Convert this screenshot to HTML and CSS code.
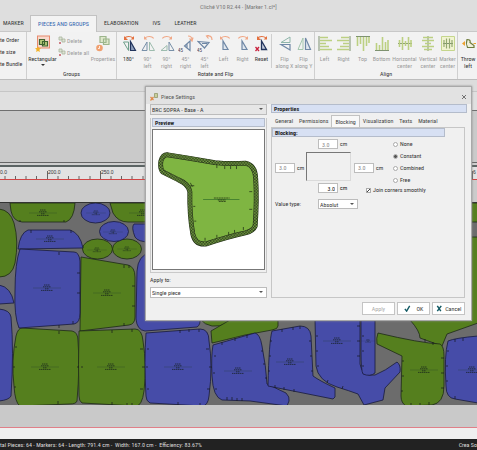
FILE: index.html
```html
<!DOCTYPE html>
<html lang="en">
<head>
<meta charset="utf-8">
<title>Cliché V10 R2.44 - [Marker 1.cl*]</title>
<link rel="stylesheet" href="styles.css">
</head>
<body>
<svg class="defs" aria-hidden="true">
  <defs>
    <pattern id="mesh" width="3" height="3" patternUnits="userSpaceOnUse"><rect width="3" height="3" fill="#26361a"/><path d="M0 0h1.500v1.500H0zM1.500 1.500H3V3H1.500z" fill="#7da845"/></pattern>
    <symbol id="arc-r" viewBox="0 0 14 5"><path d="M1.5 3.5C4 .8 9 .8 11.5 3" fill="none" stroke="currentColor" stroke-width="1.3"/><path d="M12.8.8v4H9z" fill="currentColor"/></symbol>
    <symbol id="arc-l" viewBox="0 0 14 5"><path d="M12.5 3.5C10 .8 5 .8 2.5 3" fill="none" stroke="currentColor" stroke-width="1.3"/><path d="M1.2.8v4H5z" fill="currentColor"/></symbol>
    <g id="label"><path d="M-14 0h28" stroke="#203a2a" stroke-width=".4" opacity=".7"/><path d="M-3-3h6M-4-1.2h8M-2 .8h4M-6 2.4h12" stroke="#14201c" stroke-width=".7" stroke-dasharray="1.500 .5"/></g>
  </defs>
</svg>

<header class="titlebar">Cliché V10 R2.44 - [Marker 1.cl*]</header>
<nav class="tabs">
  <a href="#" class="tab t-marker">MARKER</a>
  <a href="#" class="tab active">PIECES AND GROUPS</a>
  <a href="#" class="tab">ELABORATION</a>
  <a href="#" class="tab">IVS</a>
  <a href="#" class="tab">LEATHER</a>
</nav>

<section class="ribbon">
  <div class="group create">
    <button>te Order</button><button>te size</button><button>te Bundle</button>
  </div>
  <div class="group groups">
    <div class="tools">
      <button class="tool w-rect"><svg viewBox="0 0 16 17"><rect x="2.5" y="1" width="12" height="12" fill="#f7d9cc" stroke="#e88a6c"/><path d="M4.5 4.500h5v5h-5zM7.500 6.500h5v4.500h-5z" fill="#b8ce7c" stroke="#3f6430" stroke-width="1.200"/><path d="M3 11l.9 2.100 2.100.2-1.600 1.500.5 2.200L3 15.900 1.100 17l.5-2.200L0 13.300l2.100-.2z" fill="#f3b125"/></svg><span>Rectangular</span><i class="caret"></i></button>
      <div class="pair">
        <button class="row off"><svg viewBox="0 0 8 9"><path d="M1 1h3v3H1zM4 3h3v3H4z" fill="#dde3d2" stroke="#a9b5a0" stroke-width=".8"/><path d="M1 6l2 2M3 6L1 8" stroke="#cf7f86"/></svg>Delete</button>
        <button class="row off"><svg viewBox="0 0 8 9"><path d="M1 1h3v3H1zM4 3h3v3H4z" fill="#dde3d2" stroke="#a9b5a0" stroke-width=".8"/><path d="M1 6l2 2M3 6L1 8" stroke="#cf7f86"/></svg>Delete all</button>
      </div>
      <button class="tool w-prop off"><svg viewBox="0 0 16 17"><path d="M5 1.500h6v6H5zM8.500 4h5.500v5.500H8.500z" fill="#dfe8cc" stroke="#9cb58c" stroke-width="1.200"/><circle cx="4.500" cy="13" r="3.300" fill="#f0a070"/><path d="M4.500 11v2.500h-1.500" stroke="#fff" fill="none" stroke-width=".8"/></svg><span>Properties</span></button>
    </div>
    <h2>Groups</h2>
  </div>
  <div class="group rotate">
    <div class="tools">
      <button class="tool"><svg viewBox="0 0 16 17"><g color="#e4703e"><use href="#arc-r" x="2" y="0" width="12" height="5"/><path d="M3 1v4h4z" fill="currentColor"/></g><path d="M7.500 7v8.500L2.500 7z" fill="none" stroke="#6fa08c"/><path d="M9.500 6.500v9h5z" fill="#8fa0bd" stroke="#22345c" stroke-width="1.200"/></svg><span>180°</span></button>
      <button class="tool off"><svg viewBox="0 0 16 17"><use href="#arc-l" x="3" width="12" height="5" color="#f0a887"/><path d="M7 7v8.500H2z" fill="none" stroke="#7890a8"/><path d="M9.500 7v8.500h5z" fill="none" stroke="#9dbcae"/></svg><span>90°<br>left</span></button>
      <button class="tool off"><svg viewBox="0 0 16 17"><use href="#arc-r" x="2" width="12" height="5" color="#f0a887"/><path d="M8 15.500H2l6-5z" fill="none" stroke="#9dbcae"/><path d="M10 7v8.500h5z" fill="none" stroke="#7890a8"/></svg><span>90°<br>right</span></button>
      <button class="tool off"><svg viewBox="0 0 16 17"><path d="M10 1q4 0 4 4M11.500 3.500L14 6l1-3.500" fill="none" stroke="#f0a887" stroke-width="1.200"/><path d="M12 6v9.500L6.500 11zM9 8.500v5" fill="none" stroke="#6e87a5" stroke-width="1.200"/><text x="0" y="17" class="deg">45</text></svg><span>45°<br>right</span></button>
      <button class="tool off"><svg viewBox="0 0 16 17"><path d="M10 1q5-1 5 4M12 0L9.500 1l2 2.500" fill="none" stroke="#f0a887" stroke-width="1.200"/><path d="M1 6.500l11 1L7.500 13zM5 8.500h5" fill="none" stroke="#6e87a5" stroke-width="1.200"/><text x="0" y="17" class="deg">45</text></svg><span>45°<br>left</span></button>
      <button class="tool off"><svg viewBox="0 0 16 17"><use href="#arc-l" x="3" width="12" height="5" color="#f0a887"/><path d="M7 6v8.500h5z" fill="#dfe6ee" stroke="#6e87a5" stroke-width="1.200"/></svg><span>Left</span></button>
      <button class="tool off"><svg viewBox="0 0 16 17"><use href="#arc-r" x="2" width="12" height="5" color="#f0a887"/><path d="M7 6v8.500h5z" fill="#dfe6ee" stroke="#6e87a5" stroke-width="1.200"/></svg><span>Right</span></button>
      <button class="tool"><svg viewBox="0 0 16 17"><g color="#e4703e"><use href="#arc-r" x="2" width="12" height="5"/><path d="M3 1v4h4z" fill="currentColor"/></g><path d="M7.500 6v8.500h5z" fill="#c3ccdb" stroke="#22345c" stroke-width="1.300"/><path d="M1.500 12l3.500 4M5 12l-3.500 4" stroke="#c8203c" stroke-width="1.300"/></svg><span>Reset</span></button>
      <div class="sep"></div>
      <button class="tool off"><svg viewBox="0 0 16 17"><path d="M13 7.500H4l9-5.500z" fill="none" stroke="#8fb5aa"/><path d="M13 9.500H4l9 5.500z" fill="none" stroke="#7088a6" stroke-width="1.200"/></svg><span>Flip<br>along X</span></button>
      <button class="tool off"><svg viewBox="0 0 16 17"><path d="M7 3v11.500H2z" fill="none" stroke="#a3c6ae"/><path d="M9.500 3v11.500h5z" fill="#dfe6ee" stroke="#7088a6" stroke-width="1.200"/></svg><span>Flip<br>along Y</span></button>
    </div>
    <h2>Rotate and Flip</h2>
  </div>
  <div class="group align">
    <div class="tools">
      <button class="tool off"><svg viewBox="0 0 16 17"><path d="M2 1v15" stroke="#7e9270"/><path d="M3 2.500h8M3 5.500h12M3 8.500h6M3 11.500h9M3 14.500h12" stroke="#bcd082" stroke-width="1.600"/></svg><span>Left</span></button>
      <button class="tool off"><svg viewBox="0 0 16 17"><path d="M14 1v15" stroke="#7e9270"/><path d="M13 2.500H5M13 5.500H1M13 8.500H7M13 11.500H4M13 14.500H1" stroke="#bcd082" stroke-width="1.600"/></svg><span>Right</span></button>
      <button class="tool off"><svg viewBox="0 0 16 17"><path d="M1 1.500h14" stroke="#7e9270"/><path d="M2.500 2v9M5.500 2v7M8.500 2v14M11.500 2v9M14 2v6" stroke="#bcd082" stroke-width="1.600"/></svg><span>Top</span></button>
      <button class="tool off"><svg viewBox="0 0 16 17"><path d="M1 15.500h14" stroke="#7e9270"/><path d="M2.500 15V8M5.500 15v-5M8.500 15V2M11.500 15V7M14 15V5" stroke="#bcd082" stroke-width="1.600"/></svg><span>Bottom</span></button>
      <button class="tool w-h off"><svg viewBox="0 0 16 17"><path d="M1 8.500h14" stroke="#7e9270"/><path d="M2.500 5v7M5.500 2v13M8.500 6v5M11.500 2v13M14 5v7" stroke="#bcd082" stroke-width="1.600"/></svg><span>Horizontal<br>center</span></button>
      <button class="tool w-v off"><svg viewBox="0 0 16 17"><path d="M8 1v15" stroke="#7e9270"/><path d="M3 2.500h10M2 5.500h12M5 8.500h6M2 11.500h12M4 14.500h8" stroke="#bcd082" stroke-width="1.600"/></svg><span>Vertical<br>center</span></button>
      <button class="tool w-m off"><svg viewBox="0 0 16 17"><path d="M1.500 1.500h13v14h-13z" fill="#f1f4d2" stroke="#c5d68c"/><path d="M3 8.500h10" stroke="#7e9270"/><path d="M4 5v7M6.500 3.500v10M9.500 3.500v10M12 5v7" stroke="#93a870" stroke-width="1.200"/></svg><span>Marker<br>center</span></button>
    </div>
    <h2>Align</h2>
  </div>
  <div class="group throw">
    <div class="tools">
      <button class="tool w-throw"><svg viewBox="0 0 16 17"><path d="M7 4.500q4 0 3 3l4 3v2H7.500q-2-4-.5-8z" fill="#f0f0dc" stroke="#6e7c3c" stroke-width="1.200"/><path d="M5 6v5L2 8.500z" fill="#eca22f"/><path d="M13.500 8.500H16" stroke="#eca22f"/></svg><span>Throw<br>left</span></button>
    </div>
  </div>
</section>

<main class="workspace">
  <div class="strip"></div>
  <div class="band"></div>
  <div class="overview"></div>
  <div class="splitter"></div>
  <svg class="ruler" viewBox="0 0 477 12" preserveAspectRatio="xMinYMin slice">
    <path d="M5 9v3M15.500 9v3M26 9v3M36.500 9v3M47.500 4v8M58 9v3M68.500 9v3M79 9v3M90 9v3M100.500 4v8M111 9v3M121.500 9v3M132 9v3M143 9v3M472.500 4v8" stroke="#444" stroke-width=".8"/>
    <text x="0" y="7">0.0</text><text x="48" y="7">200.0</text><text x="101" y="7">250.0</text><text x="473" y="7">6</text>
  </svg>
  <div class="margin-top"></div>
  <svg class="pieces" viewBox="0 202 477 203" preserveAspectRatio="xMinYMin slice" role="img" aria-label="Nested pieces">
    <g class="g">
      <path d="M10 202L11 210Q13 220 22 221H66Q74 218 75 202z"/>
      <path d="M110 202l3 10Q118 221 128 221H160V202z"/>
      <ellipse cx="97.500" cy="248" rx="15" ry="10"/><ellipse cx="127" cy="248" rx="14.500" ry="10"/>
      <path d="M-1 208Q10 209 14 222Q19 240 15 262Q12 276-1 276z"/>
      <path d="M81 256l47 8q7 2 7 12v40q0 7-6 8l-49 6z"/>
      <path d="M22 327l50 3q6 1 6 10q2 25-1 60q-1 3-7 3l-50 2q-5-3-6-20q-3-25 2-50q2-8 6-8z"/>
      <path d="M79 330l56-2q7 0 8 12q4 25 1 50q-2 15-8 15l-54-3q-3-2-3-7q-1-30 0-65z"/>
      <path d="M200 318q10 12 28 4l6-4z"/>
      <path d="M211 330l19-11h48v6q0 3-6 4l-27 5q-20 5-33 8z"/>
      <path d="M410 319h61v-83h7v86l-31 11-5 12-22-8q0-7-10-18z"/>
      <path d="M470 202h8v19h-8z"/>
      <path d="M378 332q42 10 62 11q4 2 4 12v30q0 17-12 19l-26 1q-5-3-5-10l1-40-25-12q-1-6 1-11z"/>
    </g>
    <g class="b">
      <ellipse cx="95.500" cy="212" rx="14.500" ry="10"/><ellipse cx="114" cy="230.500" rx="14.500" ry="10"/>
      <path d="M18 248Q20 232 28 229H70Q80 232 83 247z"/>
      <path d="M20 248Q15 262 15 290Q14 315 19 327L74 323Q80 322 80 312V260Q79 251 74 251z"/>
      <path d="M150 223H134Q131 226 135 236Q138 241 150 241z"/>
      <path d="M150 252q-12 2-13 18l-1 48q1 11 9 12l52-4q4-2 3-11v-60z"/>
      <path d="M-1 284Q11 286 14 302L-1 303z"/>
      <path d="M-1 308q11 1 12 8q3 34 0 79q-2 4-12 5z"/>
      <path d="M146 332l54-4q9 0 9 12q4 25 0 55q-1 10-7 10l-52-3q-4-2-4-7q-2-35 0-63z"/>
      <path d="M213 344l42-12q5 1 7 13q4 20 5 38l19 9q4 4 3 8l-2 5-37-5-28-1q-9-3-10-24q-1-20 1-31z"/>
      <path d="M272 330l28-5q10 0 11 10l2 40q7 5 22 12v9l-2 2-65-13q1-45 4-55z"/>
      <path d="M315 318h45v45q2 13 15 11q10-4 22-13q4 3 3 10l-15 16-2 12-19 5-6-11q-8-3-21-7q-19-6-21-21z"/>
      <path d="M361 318h14v54q-5 4-12 1q-2-3-2-23z"/>
      <path d="M448 340q7-3 30-5v67l-23-4q-9-1-9-13q-2-30 2-45z"/>
    </g>
    <g class="notches">
      <path d="M20 221v-2M64 221v-2M31 229v3M71 229v3M59 251v3M59 327v-3M73 323v-3M80 272h-3M80 292h-3M135 285h-3M135 305h-3M124 264v3M129 264v3M124 325v-3M59 330v3M58 403v-3M13 366h2M79 366h-2M81 366h2M15 346h2M14 386h2M112 329v3M132 328v3M112 404v-3M127 405v-3M132 405v-3M143 348h-3M145 366h-3M143 388h-3M147 348h2M146 366h2M147 388h2M180 329v3M189 328v3M199 328v3M178 404v-3M200 405v-3M209 348h-3M212 366h-3M210 388h-3M214 355h2M213 372h2M215 388h2M222 341v3M235 337v3M247 334v3M227 399v-3M232 399v-3M237 400v-3M242 400v-3M263 350h-2M265 363h-2M267 377h-2M282 328v3M293 326v3M300 325v3M270 340h2M269 355h2M268 370h2M311 340h-2M312 355h-2M313 370h-2M275 387v-3M284 389v-3M294 391v-3M316 335h2M316 350h2M317 365h2M327 382l1-3M342 388l1-3M360 325h-3M360 340h-3M360 355h-3M362 335h2M362 350h2M362 365h2M402 360h2M402 375h2M401 390h2M444 357h-3M444 372h-3M444 387h-3M411 405v-3M420 405v-3M429 404v-3M425 341v-3M433 344v-3M455 338v3M463 337v3M447 350h2M446 365h2M446 380h2M455 398v-3"/>
    </g>
    <g><use href="#label" x="43" y="212"/><use href="#label" x="143" y="212"/><use href="#label" transform="translate(96 212) scale(.7)"/><use href="#label" transform="translate(113 231) scale(.7)"/><use href="#label" transform="translate(97 249) scale(.7)"/><use href="#label" transform="translate(127 248) scale(.7)"/><use href="#label" x="50" y="238"/><use href="#label" x="47" y="287"/><use href="#label" x="107" y="292"/><use href="#label" x="45" y="366"/><use href="#label" x="111" y="366"/><use href="#label" x="178" y="366"/><use href="#label" x="238" y="370"/><use href="#label" x="290" y="361"/><use href="#label" x="337" y="340"/><use href="#label" transform="translate(368 340) scale(.5)"/><use href="#label" x="424" y="369"/><use href="#label" x="472" y="369"/></g>
  </svg>
  <div class="margin-bottom"></div>
  <div class="floor"></div>
</main>

<footer class="status"><span>tal Pieces: 64 - Markers: 64 - Length: 791.4 cm -&nbsp; Width: 167.0 cm -&nbsp; Efficiency: 83.67%</span><span class="crea">Crea So</span></footer>

<section class="dialog" role="dialog" aria-label="Piece Settings">
  <header class="dlg-title">
    <svg viewBox="0 0 8 8"><path d="M4.500.5h3v4h-3z" fill="#c9cf9c" stroke="#8a9060" stroke-width=".7"/><path d="M.5 4l3 3M3.500 4l-3 3.500" stroke="#e08a4a" stroke-width="1.200"/></svg>
    <span>Piece Settings</span><button class="close" aria-label="Close"><svg viewBox="0 0 6 6"><path d="M1 1l4 4M5 1L1 5" stroke="#555" stroke-width=".8"/></svg></button>
  </header>
  <div class="dlg-body">
    <div class="left">
      <div class="pick gray"><select aria-label="Piece"><option>BRC SOPRA - Base - A</option></select></div>
      <div class="preview">
        <h3>Preview</h3>
        <svg viewBox="152 130 113 140" role="img" aria-label="Piece preview">
          <path d="M167 154.500Q190 158 215 162.500Q230 164 246 163Q256 165 256.500 178Q258 200 256 227Q254 232 246 234Q228 238 207 245Q195 247 192.500 235Q189 215 189.500 192Q188 184 178 180L162 172Q159 169 160 161Q162 154 167 154.500z" fill="#7fb542" stroke="#1f2b14" stroke-width="5"/>
          <path d="M167 154.500Q190 158 215 162.500Q230 164 246 163Q256 165 256.500 178Q258 200 256 227Q254 232 246 234Q228 238 207 245Q195 247 192.500 235Q189 215 189.500 192Q188 184 178 180L162 172Q159 169 160 161Q162 154 167 154.500z" fill="none" stroke="url(#mesh)" stroke-width="4"/>
          <path d="M203 200h37" stroke="#2f6d28" stroke-width=".7"/><path d="M214 198.500h16M218 200.500h8M219 202h7" stroke="#17240f" stroke-width=".7" stroke-dasharray="2 .5"/>
          <path d="M217 165v3M225 166v3M231 166v3M237 166v3M192 187l-2-4M194 186h-4M253 192h-3M253 210h-3M193 207h2M194 222h2M205 242v-3M217 239v-3M229 236v-3M235 234v-3M244 231v-3" stroke="#243417" stroke-width=".8"/>
        </svg>
      </div>
      <label class="apply-label" for="apply-to">Apply to:</label>
      <div class="pick"><select id="apply-to"><option>Single piece</option></select></div>
    </div>
    <div class="right">
      <h3>Properties</h3>
      <div class="dlg-tabs"><button>General</button><button>Permissions</button><button class="on">Blocking</button><button>Visualization</button><button>Texts</button><button>Material</button></div>
      <div class="panel">
        <h3>Blocking:</h3>
        <div class="form">
          <div class="offsets">
            <label class="num top"><input value="3.0" disabled>cm</label>
            <label class="num"><input value="3.0" disabled>cm</label>
            <div class="box"></div>
            <label class="num"><input value="3.0" disabled>cm</label>
            <label class="num bottom"><input value="3.0">cm</label>
          </div>
          <div class="modes">
            <label><input type="radio" name="mode">None</label>
            <label><input type="radio" name="mode" checked>Constant</label>
            <label><input type="radio" name="mode">Combined</label>
            <label><input type="radio" name="mode">Free</label>
          </div>
          <label class="join"><input type="checkbox" checked>Join corners smoothly</label>
        </div>
        <div class="value-type"><label for="vt">Value type:</label><div class="pick"><select id="vt"><option>Absolut</option></select></div></div>
      </div>
    </div>
  </div>
  <footer class="actions">
    <button disabled>Apply</button>
    <button><svg viewBox="0 0 8 8"><path d="M1 4.500l2 2.500L6.500 1" fill="none" stroke="#125a64" stroke-width="1.600"/></svg><span>OK</span></button>
    <button><svg viewBox="0 0 8 8"><path d="M1.500 1l4 6M6 1L1.500 7" stroke="#125a64" stroke-width="1.700"/></svg><span>Cancel</span></button>
  </footer>
</section>
</body>
</html>
```
FILE: styles.css
```css
* { box-sizing: border-box; }
body {
  margin: 0; min-height: 100vh; position: relative; overflow: hidden;
  display: flex; flex-direction: column; background: #dedede; color: #333;
  font: 6px/8px "Roboto Condensed", Lato, sans-serif;
}
button, input, select { font: inherit; color: inherit; padding: 0; margin: 0; border: 0; background: none; border-radius: 0; }
button { white-space: nowrap; }
h2, h3 { margin: 0; font: inherit; }
svg { display: block; flex: none; }
.defs { position: absolute; width: 0; height: 0; }

.titlebar { height: 15px; line-height: 14px; text-align: center; color: #777; }

.tabs { display: flex; height: 16px; }
.tab { color: #333; text-decoration: none; line-height: 15px; padding: 0 7px; white-space: nowrap; }
.t-marker { padding: 0 6px 0 3px; width: 30px; }
.tab.active { color: #2d62ad; background: #f3f3f3; border: 1px solid #c2c2c2; border-bottom: 0; width: 67px; text-align: center; margin-bottom: -1px; position: relative; }

.ribbon { display: flex; height: 49px; background: #f2f2f2; border-top: 1px solid #c8c8c8; border-bottom: 1px solid #bdbdbd; overflow: hidden; }
.group { display: flex; flex-direction: column; justify-content: space-between; flex: none; border-right: 1px solid #cfcfcf; padding-top: 2px; }
.group h2 { text-align: center; line-height: 8px; padding-bottom: 1px; color: #333; }
.tools { display: flex; }
.create { width: 27px; justify-content: flex-start; gap: 3px; padding-top: 3px; overflow: hidden; }
.create button { text-align: left; height: 9px; line-height: 9px; }
.groups { width: 90px; }
.rotate { width: 198px; }
.rotate .tools { padding-left: 2px; }
.align { width: 143px; }
.throw { width: 30px; border: 0; }
.tool { width: 19px; display: flex; flex-direction: column; align-items: center; line-height: 7px; }
.tool svg { width: 16px; height: 17px; margin: 1px 0 3px; }
.tool span { text-align: center; }
.off { color: #9c9c9c; }
.w-rect { width: 31px; }
.w-prop { width: 26px; }
.w-h { width: 27px; }
.w-v { width: 20px; }
.w-m { width: 19px; }
.w-throw { width: 20px; }
.caret { border: 2px solid transparent; border-top: 2px solid #333; border-bottom: 0; margin-top: 2px; }
.pair { display: flex; flex-direction: column; gap: 3px; padding-top: 2px; width: 32px; }
.row { display: flex; align-items: center; gap: 1px; height: 9px; }
.row svg { width: 8px; height: 9px; }
.sep { width: 1px; height: 34px; background: #cfcfcf; margin-right: 3px; }
.deg { font-size: 5px; fill: #445; }

.workspace { flex: 1; display: flex; flex-direction: column; }
.workspace > div { flex: none; }
.strip { height: 12px; background: #dcdcdc; border-bottom: 1px solid #c6c6c6; }
.band { height: 18px; background: #e0e0e0; }
.overview { height: 52px; background: #cacaca; border-top: 1px solid #6f6f6f; }
.splitter { height: 5px; border-top: 1px solid #666; border-bottom: 2px solid #5c6464; background: #cfcfcf; }
.ruler { height: 12px; width: 100%; background: #e2e2e2; }
.ruler text { font: 5px "Liberation Sans", sans-serif; fill: #333; }
.margin-top { height: 23px; background: #cbcbcb; border-top: 1px solid #d04444; }
.workspace > .pieces { flex: 1 0 203px; width: 100%; background: #6c6c6c; border-top: 1px solid #333; }
.pieces .g { fill: #557f1e; stroke: #1d2a16; stroke-width: .8; }
.pieces .b { fill: #464ca8; stroke: #181a3c; stroke-width: .8; }
.notches { stroke: #15181c; stroke-width: .7; }
.margin-bottom { height: 23px; background: #c9c9c9; border-bottom: 1px solid #e07f88; }
.floor { height: 11px; background: #efefef; }

.status { display: flex; justify-content: space-between; height: 11px; line-height: 12px; background: #222; color: #ddd; overflow: hidden; white-space: nowrap; }

.dialog { position: absolute; left: 145px; right: 5px; top: 86px; background: #f0f0f0; border: 1px solid #a9a9a9; padding: 0 4px; box-shadow: 0 0 2px #888; }
.dlg-title { display: flex; align-items: center; gap: 3px; height: 17px; margin: 0 -4px; padding: 2px 4px 0; background: #e2e2e2; color: #555; }
.dlg-title > svg { width: 8px; height: 8px; }
.close { margin-left: auto; }
.close svg { width: 6px; height: 6px; }
.dlg-body { display: flex; gap: 4px; }
.left { width: 117px; display: flex; flex-direction: column; }
.right { flex: 1; display: flex; flex-direction: column; }
.dialog h3 { background: #d7e0f3; border: 1px solid #b4bccb; font-weight: bold; color: #222; height: 9px; line-height: 7px; padding-left: 2px; }
.pick { position: relative; height: 11px; background: #fff; border: 1px solid #bcbcbc; display: flex; }
.pick.gray { background: #e6e6e6; }
.pick select { appearance: none; flex: 1; padding-left: 1px; line-height: 9px; }
.pick::after { content: ""; position: absolute; right: 3px; top: 3px; border: 2px solid transparent; border-top-color: #555; border-bottom: 0; }
.preview { border: 1px solid #c9c9c9; border-top: 0; margin: 3px 0 2px; padding: 0 1px 2px; }
.preview svg { width: 100%; height: 141px; margin-top: 2px; background: #fff; border: 1px solid #777; }
.apply-label { height: 12px; line-height: 10px; }
.dlg-tabs { display: flex; height: 14px; padding: 2px 0 0 1px; }
.dlg-tabs button { height: 12px; padding: 0 3px; color: #444; }
.dlg-tabs .on { background: #f8f8f8; border: 1px solid #c2c2c2; border-bottom: 0; }
.panel { flex: 1; border: 1px solid #c6c6c6; margin-right: 2px; }
.panel h3 { margin-right: 19px; }
.form { display: grid; grid-template-columns: 118px 1fr; padding: 2px 4px 0 3px; }
.offsets { grid-row: 1 / 3; display: grid; grid-template-columns: 31px 48px 30px; grid-template-rows: 13px 31px 11px; align-items: start; }
.num { display: flex; align-items: center; gap: 2px; }
.num input { width: 20px; height: 10px; background: #fff; border: 1px solid #bdbdbd; padding-left: 3px; }
.num input:disabled { color: #888; }
.num.top, .num.bottom { grid-column: 2 / 4; padding-left: 12px; }
.num.bottom input { text-align: right; padding-right: 2px; }
.num.bottom { color: #111; }
.box { width: 45px; height: 29px; border: 1px solid #dadada; border-top-color: #777; border-left-color: #777; }
.offsets > .num:not(.top):not(.bottom) { align-self: center; }
.modes { display: flex; flex-direction: column; gap: 4px; padding-top: 1px; }
.modes label, .join { display: flex; align-items: center; gap: 2px; height: 8px; white-space: nowrap; }
.join { grid-column: 2; margin: 2px 0 0 -27px; }
.form input[type=radio], .form input[type=checkbox] { appearance: none; width: 5px; height: 5px; background: #fff; border: 1px solid #aaa; flex: none; }
.form input[type=radio] { border-radius: 50%; }
.form input[type=radio]:checked { background: #555; border-color: #bbb; }
.form input[type=checkbox] { background: linear-gradient(135deg, #fff 40%, #444 40% 65%, #fff 65%); }
.value-type { display: flex; align-items: center; padding: 5px 3px; }
.value-type label { width: 43px; }
.value-type .pick { width: 40px; height: 10px; }
.actions { display: flex; justify-content: flex-end; gap: 2px; padding: 4px 2px 5px; }
.actions button { width: 33px; height: 13px; background: #fff; border: 1px solid #c4c4c4; display: flex; align-items: center; justify-content: space-evenly; color: #333; }
.actions button:disabled { color: #aaa; }
.actions svg { width: 7px; height: 7px; }
```
